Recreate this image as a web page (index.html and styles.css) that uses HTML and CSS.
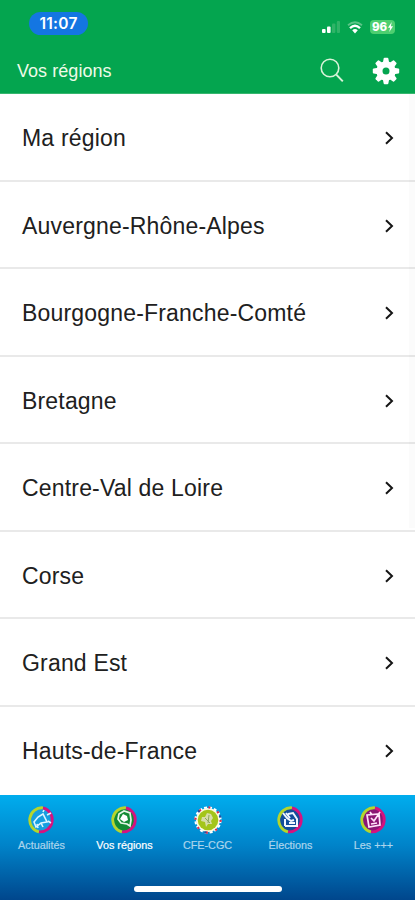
FILE: index.html
```html
<!DOCTYPE html>
<html lang="fr">
<head>
<meta charset="utf-8">
<meta name="viewport" content="width=device-width, initial-scale=1">
<title>Vos régions</title>
<link rel="stylesheet" href="styles.css">
</head>
<body>
<div class="app">
  <header class="header">
    <div class="status">
      <span class="clock">11:07</span>
      <div class="indicators">
        <svg class="signal" width="18" height="14" viewBox="0 0 18 14"><rect x="0" y="9" width="3.6" height="4" rx="1" fill="#fff"/><rect x="5" y="6.5" width="3.6" height="6.5" rx="1" fill="#fff"/><rect x="10" y="3.5" width="3.4" height="9.5" rx="1" fill="#2fb367"/><rect x="14.8" y="1" width="3.2" height="12" rx="1" fill="#2fb367"/></svg>
        <svg class="wifi" width="16" height="13" viewBox="0 0 16 13" fill="none"><path d="M1 4.2Q8-1.6 15 4.2" stroke="#5cc487" stroke-width="1.8"/><path d="M3 7.2Q8 2.4 13 7.2" stroke="#fff" stroke-width="2.3"/><path d="M5.2 9.2Q8 6.8 10.8 9.2L8 12.4Z" fill="#fff"/></svg>
        <span class="battery">96<svg width="5" height="10" viewBox="0 0 5 10"><path d="M3.7 0 0 5.7h2.1L1.3 10 5 4.2H2.9Z" fill="#fff"/></svg></span>
      </div>
    </div>
    <div class="titlebar">
      <h1 class="title">Vos régions</h1>
      <svg class="search" width="24" height="25" viewBox="0 0 24 25" fill="none" stroke="#d9f3d9" stroke-width="1.6"><circle cx="10" cy="10" r="8.8"/><path d="m16.3 16.6 6.5 6.8" stroke-width="2"/></svg>
      <svg class="gear" width="28" height="28" viewBox="-14 -14 28 28"><g fill="#fff"><path id="tooth" d="M-3.2-8-2.4-12.3Q-2.2-13.2-1.4-13.2H1.4Q2.2-13.2 2.4-12.3L3.2-8Z"/><use href="#tooth" transform="rotate(45)"/><use href="#tooth" transform="rotate(90)"/><use href="#tooth" transform="rotate(135)"/><use href="#tooth" transform="rotate(180)"/><use href="#tooth" transform="rotate(225)"/><use href="#tooth" transform="rotate(270)"/><use href="#tooth" transform="rotate(315)"/></g><circle r="6.6" fill="none" stroke="#fff" stroke-width="6.2"/></svg>
    </div>
  </header>
  <main class="list">
    <div class="row"><span>Ma région</span><svg class="chevron" viewBox="0 0 9 14"><path d="m1 1.2 6 5.8-6 5.8"/></svg></div>
    <div class="row"><span>Auvergne-Rhône-Alpes</span><svg class="chevron" viewBox="0 0 9 14"><path d="m1 1.2 6 5.8-6 5.8"/></svg></div>
    <div class="row"><span>Bourgogne-Franche-Comté</span><svg class="chevron" viewBox="0 0 9 14"><path d="m1 1.2 6 5.8-6 5.8"/></svg></div>
    <div class="row"><span>Bretagne</span><svg class="chevron" viewBox="0 0 9 14"><path d="m1 1.2 6 5.8-6 5.8"/></svg></div>
    <div class="row"><span>Centre-Val de Loire</span><svg class="chevron" viewBox="0 0 9 14"><path d="m1 1.2 6 5.8-6 5.8"/></svg></div>
    <div class="row"><span>Corse</span><svg class="chevron" viewBox="0 0 9 14"><path d="m1 1.2 6 5.8-6 5.8"/></svg></div>
    <div class="row"><span>Grand Est</span><svg class="chevron" viewBox="0 0 9 14"><path d="m1 1.2 6 5.8-6 5.8"/></svg></div>
    <div class="row"><span>Hauts-de-France</span><svg class="chevron" viewBox="0 0 9 14"><path d="m1 1.2 6 5.8-6 5.8"/></svg></div>
    <div class="scrollbar"></div>
  </main>
  <footer class="footer">
    <nav class="tabs">
      <div class="tab">
        <svg class="tab-icon" viewBox="-14 -14 28 28" fill="none"><circle r="11" fill="#159fe0"/><path d="M-3 11.8A12.2 12.2 0 0 1 1-12.2" stroke="#b6d52b" stroke-width="2.8"/><path d="M1-12.2A12.2 12.2 0 0 1-3 11.8" stroke="#d6127f" stroke-width="2.8"/><path d="m-8 2 4-5 5-3 4 8-6 1-5 4ZM-5 4l1 4M-1 3l2 4M1-8l1-2M5-5l4-2M6 1l3 2" stroke="#d9f4ff" stroke-width="1.6"/></svg>
        <span>Actualités</span>
      </div>
      <div class="tab active">
        <svg class="tab-icon" viewBox="-14 -14 28 28" fill="none"><circle r="11" fill="#138b35"/><path d="M-3 11.8A12.2 12.2 0 0 1 1-12.2" stroke="#b6d52b" stroke-width="2.8"/><path d="M1-12.2A12.2 12.2 0 0 1-3 11.8" stroke="#d6127f" stroke-width="2.8"/><path d="m-6-6 5-3 6 2 1 7-1 6-3-2-6-1-3-4Z" stroke="#e5f7e7" stroke-width="1.7"/><path d="m-2-6 4 2 1 4-4 2-4-3Z" fill="#fff"/></svg>
        <span>Vos régions</span>
      </div>
      <div class="tab">
        <svg class="tab-icon" viewBox="-14 -14 28 28" fill="none"><circle r="12" fill="#fffbe0"/><circle r="12.6" stroke="#fff" stroke-width="2" stroke-dasharray="3 2"/><circle r="12.6" stroke="#d92b4c" stroke-width="2.2" stroke-dasharray="2 7.9"/><circle r="12.6" stroke="#284c9d" stroke-width="2.2" stroke-dasharray="2 24.4" stroke-dashoffset="5"/><circle r="10.3" fill="#a4c519"/><path d="m-6-3 3 0 2-4 4 1 2 4-2 3 1 3-4 0-2 3-1-5-4-1Z" fill="#d7dda8"/><path d="M-3-2 2 3M1-5 0 3" stroke="#8da65b"/></svg>
        <span>CFE-CGC</span>
      </div>
      <div class="tab">
        <svg class="tab-icon" viewBox="-14 -14 28 28" fill="none"><circle r="11" fill="#134d9b"/><path d="M-3 11.8A12.2 12.2 0 0 1 1-12.2" stroke="#b6d52b" stroke-width="2.8"/><path d="M1-12.2A12.2 12.2 0 0 1-3 11.8" stroke="#d6127f" stroke-width="2.8"/><path d="M-6 6V-1M-6 6H6V-1L2-7-3-6M-8-7l4 5 4 3 3-1M-5-7l4 5M-2 3h6" stroke="#f1f6ff" stroke-width="2"/></svg>
        <span>Élections</span>
      </div>
      <div class="tab">
        <svg class="tab-icon" viewBox="-14 -14 28 28" fill="none"><circle r="11" fill="#8b1674"/><path d="M-3 11.8A12.2 12.2 0 0 1 1-12.2" stroke="#b6d52b" stroke-width="2.8"/><path d="M1-12.2A12.2 12.2 0 0 1-3 11.8" stroke="#d6127f" stroke-width="2.8"/><path d="m-7-5 12-1 1 11-11 2ZM-3-2l3 3 6-9M-4-8l2 3M-3 4l6-1" stroke="#ffe4fa" stroke-width="1.7"/></svg>
        <span>Les +++</span>
      </div>
    </nav>
    <div class="home-indicator"></div>
  </footer>
</div>
</body>
</html>
```
FILE: styles.css
```css
* { box-sizing: border-box; }
body { margin: 0; font-family: "Liberation Sans", Arial, sans-serif; background: #fff; }
svg { display: block; flex: none; }
.app { height: 900px; display: flex; flex-direction: column; overflow: hidden; }
.header { height: 94px; flex: none; background: #04a54f; color: #fff; border-bottom: 1px solid #36b66e; }
.status { height: 47px; display: flex; align-items: flex-start; justify-content: space-between; padding: 12px 20px 0 29px; }
.clock { width: 59px; height: 23px; border-radius: 12px; background: #1476e2; font: 600 15.5px/23px Inter, sans-serif; letter-spacing: .25px; text-align: center; }
.indicators { display: flex; align-items: center; padding-top: 8px; }
.wifi { margin-left: 7px; }
.battery { display: flex; align-items: center; justify-content: center; gap: 1px; width: 25px; height: 14px; margin-left: 7px; border-radius: 4px; background: #4dcf70; font: 800 11.5px/14px Inter, sans-serif; }
.titlebar { height: 47px; display: flex; align-items: center; padding: 0 16px 0 17px; }
.title { margin: 0 auto 0 0; font-size: 18px; font-weight: 400; line-height: 24px; color: #effbe8; letter-spacing: .05px; padding-top: 1px; }
.search { margin-right: 28px; }
.gear { margin-right: -1px; }
.list { position: relative; flex: none; height: 701px; overflow: hidden; }
.row { height: 87.5px; display: flex; align-items: center; justify-content: space-between; padding: 3px 21px 0 22px; border-bottom: 2px solid #e9e9e9; font-size: 23px; line-height: 28px; letter-spacing: .18px; color: #202020; }
.row:nth-last-child(2) { border-bottom-color: transparent; }
.chevron { width: 9px; height: 14px; fill: none; stroke: #151515; stroke-width: 2; }
.scrollbar { position: absolute; top: 0; right: 0; width: 6px; height: 434px; background: rgba(0, 0, 0, .015); }
.footer { height: 105px; flex: none; display: flex; flex-direction: column; background: linear-gradient(#00adee, #0083c9 48%, #00468c); }
.tabs { height: 91px; display: grid; grid-template-columns: repeat(5, 1fr); padding-top: 11px; }
.tab { display: flex; flex-direction: column; align-items: center; color: #acd5ec; font-size: 10.8px; line-height: 14px; white-space: nowrap; -webkit-text-stroke: .2px; }
.tab.active { color: #fff; }
.tab-icon { width: 28px; height: 28px; margin-bottom: 4px; }
.home-indicator { width: 148px; height: 6px; margin: 0 auto; border-radius: 3px; background: #fff; }
```
